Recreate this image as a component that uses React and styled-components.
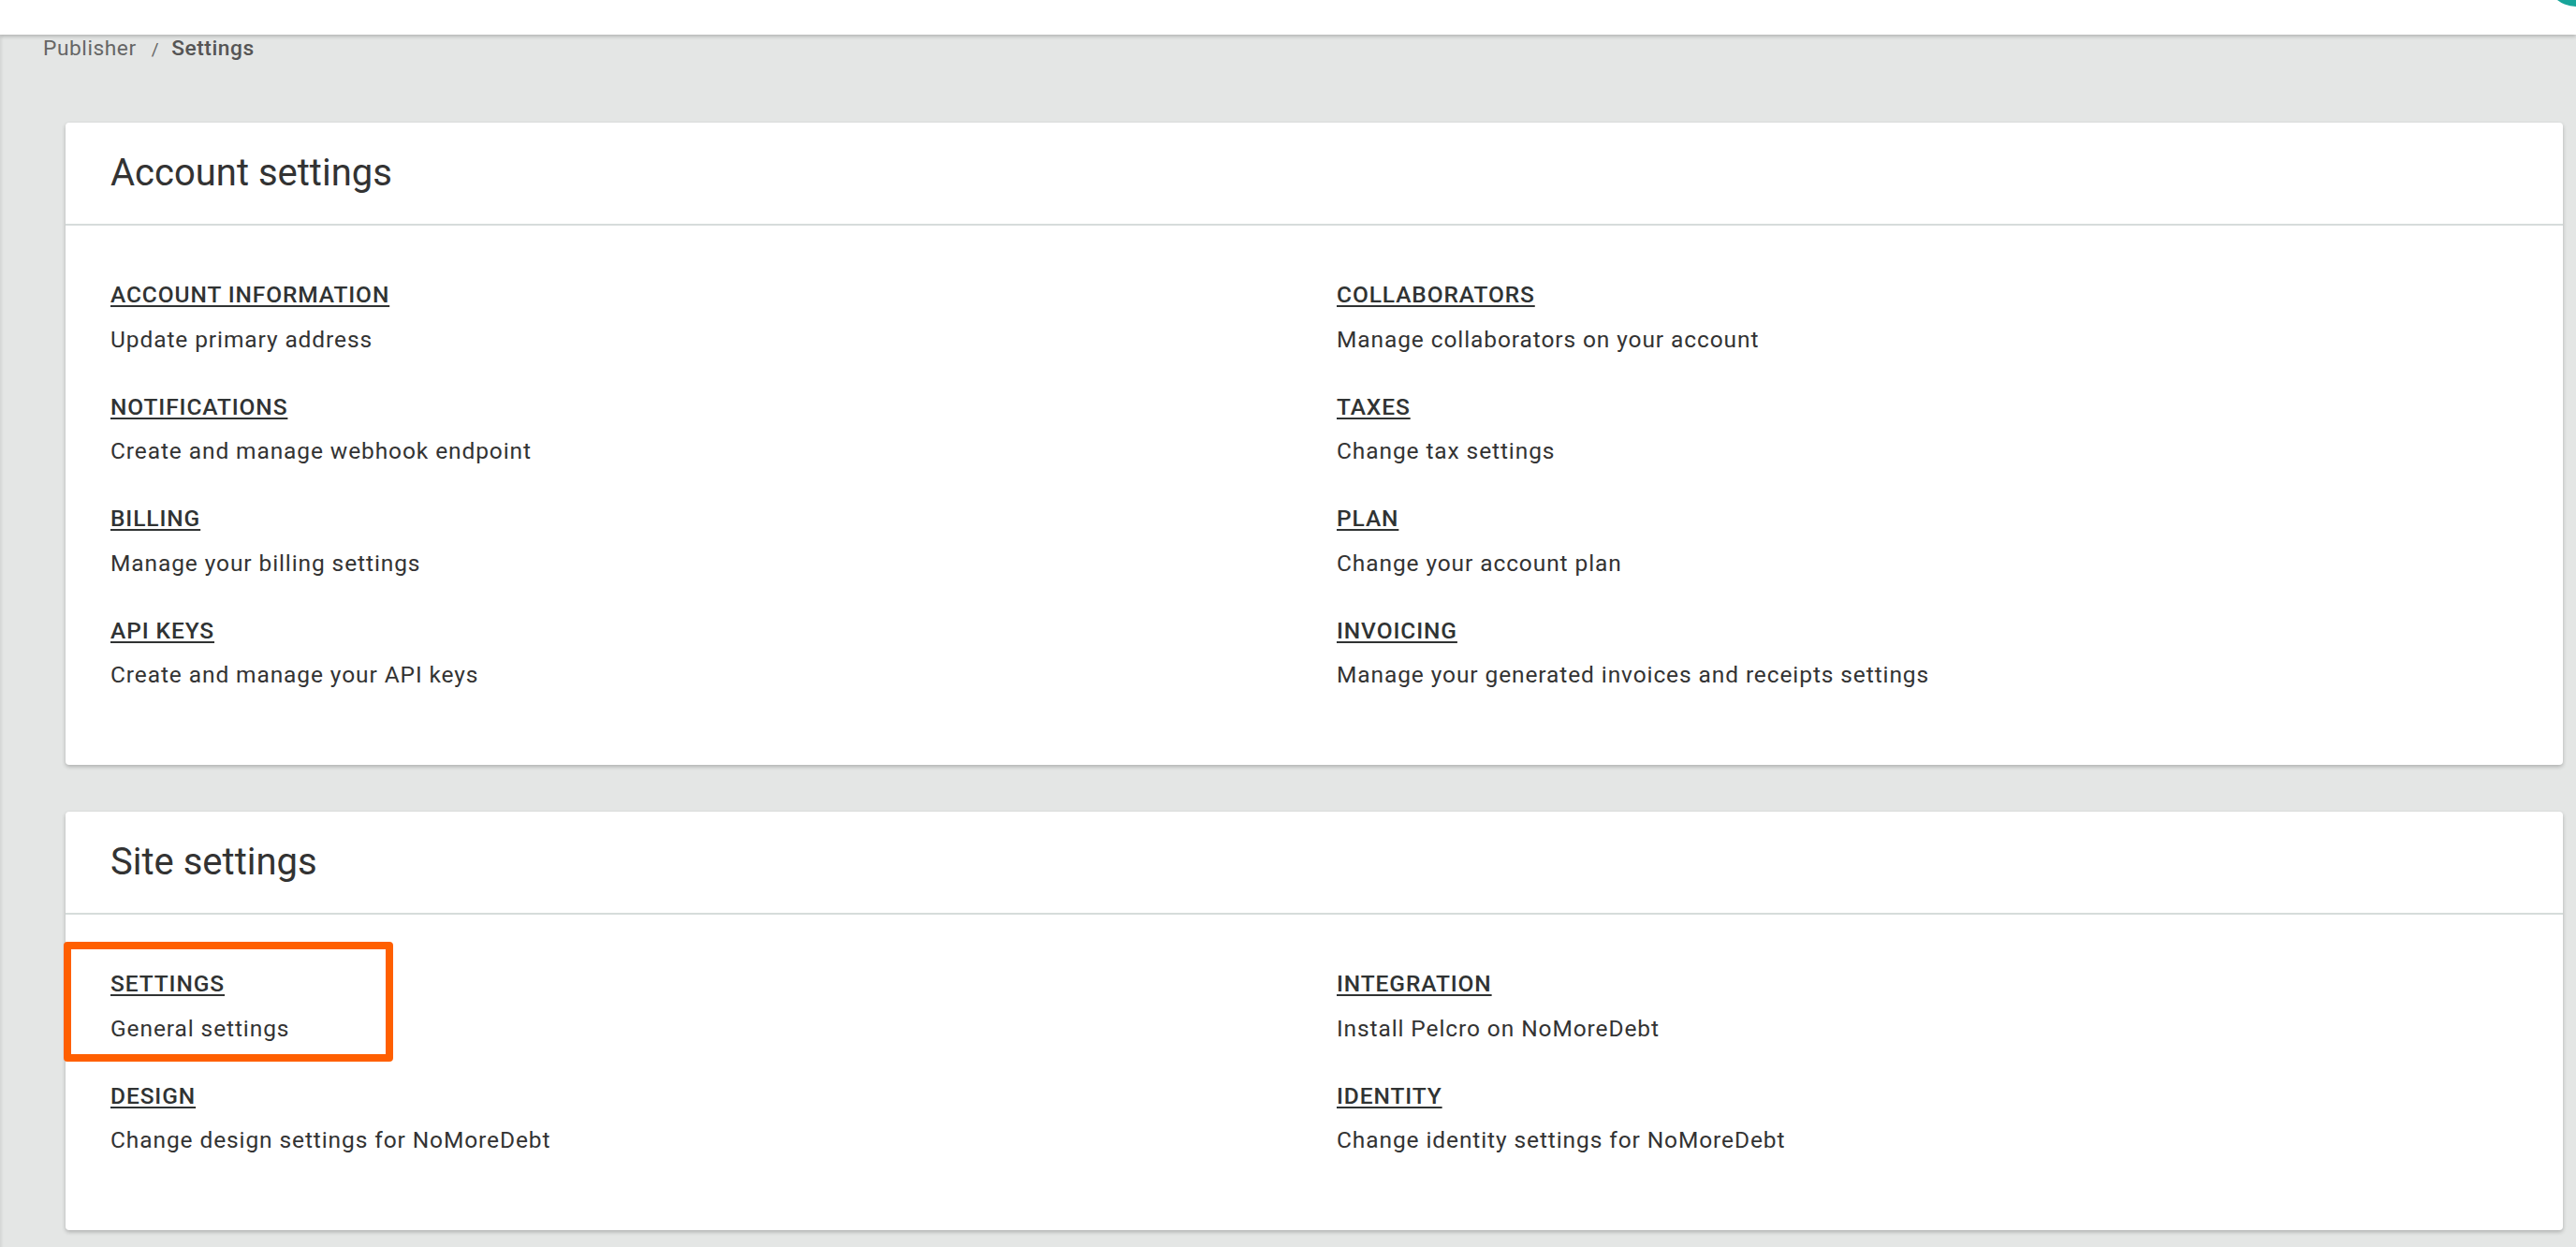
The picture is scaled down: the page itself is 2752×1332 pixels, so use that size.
import React from 'react';
import styled, { createGlobalStyle } from 'styled-components';

const GlobalStyle = createGlobalStyle`
  html, body {
    margin: 0;
    padding: 0;
    background-color: #e4e6e5;
  }
  body {
    font-family: Roboto, 'Noto Sans', 'Liberation Sans', sans-serif;
    color: #333;
  }
  * {
    box-sizing: border-box;
  }
`;

const Page = styled.div`
  min-height: 100vh;
  background-color: #e4e6e5;
  display: flex;
  flex-direction: column;
`;

const TopBar = styled.header`
  position: relative;
  height: 37px;
  background-color: #fff;
  box-shadow: 0 2px 4px rgba(0, 0, 0, 0.22);
  overflow: hidden;
  z-index: 2;
`;

/* avatar cut off by the top right corner */
const Avatar = styled.div`
  position: absolute;
  top: -57px;
  right: -32px;
  width: 64px;
  height: 64px;
  border-radius: 50%;
  background-color: #17a59a;
`;

const Main = styled.main`
  flex: 1;
  box-shadow: inset 4px 0 3px -2px rgba(0, 0, 0, 0.07);
  padding-bottom: 19px;
`;

const Breadcrumb = styled.nav`
  display: flex;
  align-items: baseline;
  padding-left: 46px;
  font-size: 22.75px;
  line-height: 30px;
  letter-spacing: 0.55px;
  color: #666;
`;

const Crumb = styled.span`
  color: ${(p) => (p.current ? '#555' : '#666')};
  font-weight: ${(p) => (p.current ? 500 : 400)};
`;

const Separator = styled.span`
  margin: 0 13px 0 16px;
  font-size: 19px;
  color: #666;
`;

const Cards = styled.div`
  display: flex;
  flex-direction: column;
  gap: 50px;
  padding: 63px 14px 0 70px;
`;

const Card = styled.section`
  background-color: #fff;
  border-radius: 4px;
  box-shadow: 0 2px 4px rgba(0, 0, 0, 0.24);
`;

const CardHeader = styled.div`
  height: 110px;
  display: flex;
  align-items: center;
  padding: 0 48px;
  border-bottom: 2px solid #d6dcdb;
`;

const CardTitle = styled.h2`
  margin: 0;
  font-size: 40px;
  font-weight: 400;
  line-height: 48px;
  color: #333;
`;

const CardBody = styled.div`
  display: grid;
  grid-template-columns: 1fr 1fr;
  row-gap: 35px;
  padding: 56px 24px 77px;
`;

const Item = styled.div`
  position: relative;
  padding: 0 24px;
`;

const Highlight = styled.div`
  position: absolute;
  top: -27px;
  left: -26px;
  width: 352px;
  height: 128px;
  border: 8px solid #ff5f00;
  border-radius: 4px;
  pointer-events: none;
`;

const ItemLink = styled.a`
  display: inline-block;
  font-size: 24.5px;
  line-height: 36.75px;
  font-weight: 500;
  letter-spacing: 0.9px;
  color: #303333;
  text-decoration: underline;
  text-decoration-thickness: 2px;
  text-underline-offset: 3px;
  cursor: pointer;
`;

const ItemText = styled.p`
  margin: 11px 0 0;
  font-size: 24.5px;
  line-height: 36.75px;
  letter-spacing: 0.9px;
  color: #333;
`;

const accountSettings = [
  ['ACCOUNT INFORMATION', 'Update primary address'],
  ['COLLABORATORS', 'Manage collaborators on your account'],
  ['NOTIFICATIONS', 'Create and manage webhook endpoint'],
  ['TAXES', 'Change tax settings'],
  ['BILLING', 'Manage your billing settings'],
  ['PLAN', 'Change your account plan'],
  ['API KEYS', 'Create and manage your API keys'],
  ['INVOICING', 'Manage your generated invoices and receipts settings'],
];

const siteSettings = [
  ['SETTINGS', 'General settings', true],
  ['INTEGRATION', 'Install Pelcro on NoMoreDebt'],
  ['DESIGN', 'Change design settings for NoMoreDebt'],
  ['IDENTITY', 'Change identity settings for NoMoreDebt'],
];

const SettingsCard = ({ title, items }) => (
  <Card>
    <CardHeader>
      <CardTitle>{title}</CardTitle>
    </CardHeader>
    <CardBody>
      {items.map(([label, text, highlighted]) => (
        <Item key={label}>
          {highlighted && <Highlight />}
          <ItemLink>{label}</ItemLink>
          <ItemText>{text}</ItemText>
        </Item>
      ))}
    </CardBody>
  </Card>
);

const App = () => (
  <>
    <GlobalStyle />
    <Page>
      <TopBar>
        <Avatar />
      </TopBar>
      <Main>
        <Breadcrumb>
          <Crumb>Publisher</Crumb>
          <Separator>/</Separator>
          <Crumb current>Settings</Crumb>
        </Breadcrumb>
        <Cards>
          <SettingsCard title="Account settings" items={accountSettings} />
          <SettingsCard title="Site settings" items={siteSettings} />
        </Cards>
      </Main>
    </Page>
  </>
);

export default App;
